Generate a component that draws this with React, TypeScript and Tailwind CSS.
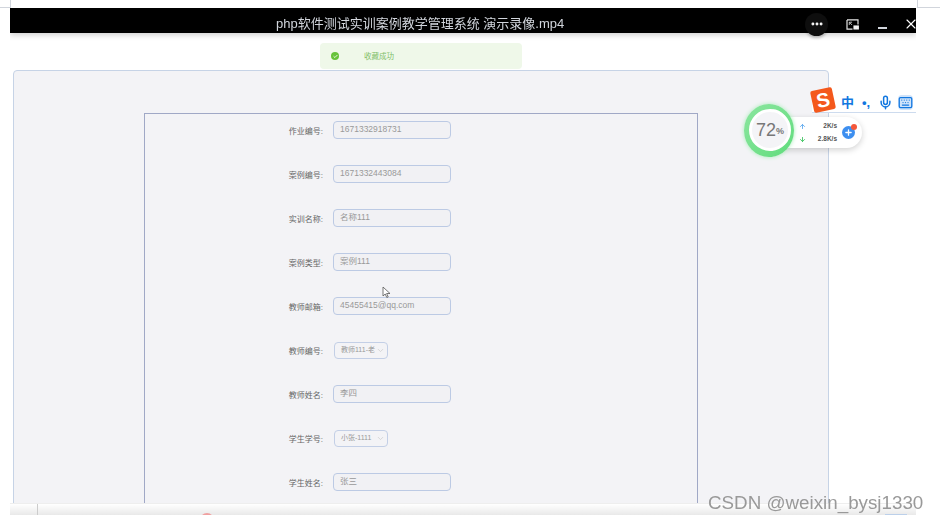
import { ArrowDown, ArrowUp, Check, ChevronDown, Ellipsis, Keyboard, Mic, Plus, X } from "lucide-react";

const rows = [
  { label: "作业编号:", value: "1671332918731" },
  { label: "案例编号:", value: "1671332443084" },
  { label: "实训名称:", value: "名称111" },
  { label: "案例类型:", value: "案例111" },
  { label: "教师邮箱:", value: "45455415@qq.com" },
  { label: "教师编号:", value: "教师111-老", select: true },
  { label: "教师姓名:", value: "李四" },
  { label: "学生学号:", value: "小张-1111", select: true },
  { label: "学生姓名:", value: "张三" },
];

export default function App() {
  return (
    <div className="relative h-[522px] w-[940px] overflow-hidden bg-white pl-[10px] pt-[8px] font-['Liberation_Sans','Noto_Sans_CJK_SC',sans-serif]">
      {/* frame corners of the player window */}
      <div className="absolute left-0 top-0 h-[8px] w-[11px] border-b border-r border-gray-300" />
      <div className="absolute left-[917px] top-0 h-[8px] w-[23px] border-b border-l border-gray-300" />

      <div className="relative flex h-[507px] w-[906px] flex-col overflow-hidden blur-[0.5px]">
        {/* title bar */}
        <div className="relative z-10 flex h-[25px] shrink-0 items-center bg-black pt-[7px] text-white shadow-[0_2px_6px_rgba(0,0,0,0.2)]">
          <div className="ml-[266px] w-[288px] whitespace-nowrap text-center text-[13px] leading-[18px] text-gray-300">
            php软件测试实训案例教学管理系统 演示录像.mp4
          </div>
          <div className="ml-[241px] flex h-[23px] w-[23px] shrink-0 items-center justify-center rounded-full bg-[#0e0e0e] shadow-[0_2px_3px_rgba(0,0,0,0.25)]">
            <Ellipsis size={14} strokeWidth={3} />
          </div>
          <svg className="ml-[18px] shrink-0" width="13" height="11" viewBox="0 0 14 12" fill="none">
            <path d="M1 1h12v5M1 1v10h6" stroke="#e5e5e5" strokeWidth="1.3" />
            <rect x="8" y="7" width="6" height="4.5" fill="#f2f2f2" />
            <path d="M3.5 3.5l3 3M3.5 6.5v-3h3" stroke="#ccc" strokeWidth="1" />
          </svg>
          <div className="ml-[19px] mt-[8px] h-[1.5px] w-[9px] shrink-0 bg-gray-300" />
          <X className="ml-[16px] shrink-0" size={16} strokeWidth={1.6} />
        </div>

        {/* page */}
        <div className="min-h-0 flex-1 overflow-hidden bg-white pl-[3px] pt-[37px]">
          <div className="h-[470px] w-[816px] rounded-t border border-[#c6d3e6] bg-[#f3f3f6] pl-[130px] pt-[42px]">
            <div className="flex h-[430px] w-[554px] flex-col gap-[26px] border-[1.5px] border-b-0 border-[#a0a8c6] pt-[7px]">
              {rows.map((row) => (
                <div key={row.label} className="flex h-[18px] shrink-0 items-center">
                  <div className="mr-[10px] mt-[3px] w-[178px] whitespace-nowrap text-right text-[8px] text-[#666]">
                    {row.label}
                  </div>
                  {row.select ? (
                    <div className="ml-px flex h-[17px] w-[54px] items-center rounded-sm border border-[#c3cfe6] pl-[6px] text-[7px] text-[#999]">
                      <span className="whitespace-nowrap">{row.value}</span>
                      <ChevronDown className="ml-auto mr-[2px] shrink-0 text-[#ccc]" size={9} />
                    </div>
                  ) : (
                    <div className="flex h-[18px] w-[118px] items-center rounded-sm border border-[#bccae4] bg-[#f1f1f4] pb-px pl-[6px] text-[8.5px] text-[#999]">
                      {row.value}
                    </div>
                  )}
                </div>
              ))}
            </div>
          </div>
        </div>

        {/* player bottom bar */}
        <div className="relative z-10 h-[12px] shrink-0 overflow-hidden border-t border-[#eee] bg-gradient-to-b from-white to-[#e9e9e9]">
          <div className="ml-[27px] h-full w-px bg-[#ccc]" />
          <div className="absolute left-[190px] top-[9px] h-[14px] w-[14px] rounded-full bg-[#f0a0a0]" />
          <div className="absolute left-[875px] top-[10px] h-[2px] w-[22px] bg-[#bcd0ea]" />
        </div>

        {/* toast */}
        <div className="absolute left-[310px] top-[35px] z-20 flex h-[26px] w-[202px] items-center rounded-sm bg-[#eff8e9] pl-[11px]">
          <div className="flex h-[8px] w-[8px] items-center justify-center rounded-full bg-[#67c23a] text-white">
            <Check size={5} strokeWidth={4} />
          </div>
          <span className="ml-[25px] mt-[2px] text-[7.5px] text-[#7fbf68]">收藏成功</span>
        </div>

        {/* cursor */}
        <svg className="absolute left-[372px] top-[278px] z-20" width="9" height="13" viewBox="0 0 9 13">
          <path d="M1 1v9l2.2-2 1.6 3.5 1.4-.6-1.6-3.4H8z" fill="#fff" stroke="#555" strokeWidth="0.8" />
        </svg>

        {/* input method bar */}
        <div className="absolute left-[802px] top-[84px] z-20 flex h-[21px] w-[104px] items-center border-b border-[#cddbee] bg-white pl-[29px] text-[#1277e0]">
          <span className="text-[13px] font-bold leading-none">中</span>
          <span className="ml-[8px] text-[13px] font-bold leading-none">•,</span>
          <Mic className="ml-[8px]" size={15} strokeWidth={2.4} />
          <Keyboard className="ml-[5px] rounded-sm bg-[#cfe3fa]" size={15} strokeWidth={2} />
        </div>
        <div className="absolute left-[802px] top-[81px] z-30 flex h-[22px] w-[22px] rotate-[-12deg] items-center justify-center rounded-[2px] bg-[#f4581c] text-[20px] font-bold leading-none text-white">
          S
        </div>

        {/* net speed widget */}
        <div className="absolute left-[770px] top-[109px] z-20 flex h-[31px] w-[82px] items-center rounded-r-[16px] bg-white pl-[19px] shadow-[0_2px_6px_rgba(0,0,0,0.18)]">
          <div className="flex w-[38px] flex-col gap-[3px] text-[6.5px] font-bold leading-[10px] text-[#555]">
            <div className="flex items-center justify-between">
              <ArrowUp className="text-[#5aa7ee]" size={7} strokeWidth={3} />
              <span>2K/s</span>
            </div>
            <div className="flex items-center justify-between">
              <ArrowDown className="text-[#3cc45e]" size={7} strokeWidth={3} />
              <span>2.8K/s</span>
            </div>
          </div>
          <div className="relative ml-[5px] flex h-[13px] w-[13px] items-center justify-center rounded-full bg-[#3d8ff0] text-white">
            <Plus size={9} strokeWidth={3.5} />
            <div className="absolute -right-[2px] -top-[2px] h-[6px] w-[6px] rounded-full bg-[#f4573a]" />
          </div>
        </div>
        <div className="absolute left-[734px] top-[96px] z-30 flex h-[53px] w-[50px] items-center justify-center rounded-[50%] bg-gradient-to-br from-[#8be69f] to-[#5fdc7c] pl-[2px] pb-[2px] shadow-[0_0_4px_#a5edb6]">
          <div className="flex h-[42px] w-[42px] items-center justify-center rounded-full border-[3px] border-white bg-[#f4f4f7] font-light text-[#777]">
            <span className="text-[18px] leading-none">72</span>
            <span className="mt-[4px] text-[9px] font-bold leading-none">%</span>
          </div>
        </div>
      </div>

      {/* watermark */}
      <div className="absolute left-[708px] top-[492px] z-40 whitespace-nowrap text-[18.8px] leading-[22px] text-[#999]">
        CSDN @weixin_bysj1330
      </div>
    </div>
  );
}
